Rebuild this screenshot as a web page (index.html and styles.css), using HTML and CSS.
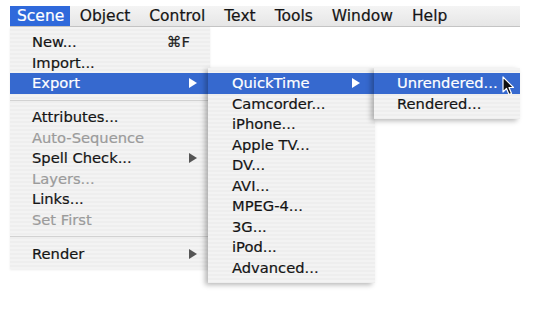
FILE: index.html
```html
<!DOCTYPE html>
<html lang="en">
<head>
    <meta charset="UTF-8">
    <meta name="viewport" content="width=device-width, initial-scale=1.0">
    <title>Scene menu</title>
    <link rel="stylesheet" href="styles.css">
</head>
<body>

<div class="menubar">
    <span class="mb-item active">Scene</span>
    <span class="mb-item">Object</span>
    <span class="mb-item">Control</span>
    <span class="mb-item">Text</span>
    <span class="mb-item">Tools</span>
    <span class="mb-item">Window</span>
    <span class="mb-item">Help</span>
</div>

<ul class="menu main">
    <li class="row">New...<span class="key">&#8984;F</span></li>
    <li class="row">Import...</li>
    <li class="row sel">Export<span class="arrow"></span>
        <ul class="menu sub1">
            <li class="row sel">QuickTime<span class="arrow"></span>
                <ul class="menu sub2">
                    <li class="row sel">Unrendered...
                        <svg class="cursor" width="13" height="20" viewBox="0 0 13 20">
                            <path d="M1 1 L1 16 L4.5 12.5 L7 18.5 L9.5 17.5 L7 11.5 L11.5 11.5 Z" fill="#111" stroke="#fff" stroke-width="1.2" stroke-linejoin="round"/>
                        </svg>
                    </li>
                    <li class="row">Rendered...</li>
                </ul>
            </li>
            <li class="row">Camcorder...</li>
            <li class="row">iPhone...</li>
            <li class="row">Apple TV...</li>
            <li class="row">DV...</li>
            <li class="row">AVI...</li>
            <li class="row">MPEG-4...</li>
            <li class="row">3G...</li>
            <li class="row">iPod...</li>
            <li class="row">Advanced...</li>
        </ul>
    </li>
    <li class="sep"></li>
    <li class="row">Attributes...</li>
    <li class="row off">Auto-Sequence</li>
    <li class="row">Spell Check...<span class="arrow"></span></li>
    <li class="row off">Layers...</li>
    <li class="row">Links...</li>
    <li class="row off">Set First</li>
    <li class="sep"></li>
    <li class="row">Render<span class="arrow"></span></li>
</ul>

</body>
</html>
```

FILE: styles.css
```css
html { height: 100%; }
body { margin: 0; padding: 6px 0 0 10px; min-height: 100%; box-sizing: border-box; background: #fff; color: #151515; font-family: "DejaVu Sans", sans-serif; font-size: 14.7px; -webkit-text-stroke: 0.2px; }

/* top bar */
.menubar { width: 510px; height: 20px; display: flex; font-size: 15.5px; background: linear-gradient(#f4f4f4, #e6e6e6); border-bottom: 1px solid #c4c4c4; }
.mb-item { padding: 0 9.5px; line-height: 20px; }
.mb-item.active { background: #2f69db; color: #fff; padding: 0 6px 0 7px; }

/* menus */
.menu { list-style: none; margin: 0; padding: 5px 0; background: repeating-linear-gradient(#f3f3f3 0, #f3f3f3 2px, #eeeeee 2px, #eeeeee 4px); }
.main { width: 200px; box-shadow: 0 1px 2px rgba(0,0,0,0.08); }
.row { position: relative; height: 20.5px; line-height: 20.5px; display: flex; justify-content: space-between; align-items: center; padding: 0 13px 0 22px; white-space: nowrap; }
.row.sel { background: #3669cf; color: #fff; }
.row.off { color: #9b9b9b; }
.sep { height: 13.5px; position: relative; }
.sep::after { content: ""; position: absolute; left: 0; right: 0; top: 6px; height: 1px; background: #d2d2d2; }
.key { color: #222; margin-right: 7px; }
.arrow { width: 0; height: 0; border-top: 5px solid transparent; border-bottom: 5px solid transparent; border-left: 8px solid #555; }
.sel > .arrow { border-left-color: #fff; }

.sub1 { position: absolute; left: 198px; top: -5px; width: 167px; color: #151515; box-shadow: -3px 2px 5px rgba(0,0,0,0.28); z-index: 2; }
.sub1 > .row { padding: 0 15px 0 24px; }
.sub2 { position: absolute; left: 166px; top: -5px; width: 146px; color: #151515; box-shadow: -3px 2px 5px rgba(0,0,0,0.28); z-index: 3; }
.sub2 > .row { padding-left: 23px; justify-content: flex-start; }
.cursor { position: absolute; left: 128px; top: 3px; }
```
